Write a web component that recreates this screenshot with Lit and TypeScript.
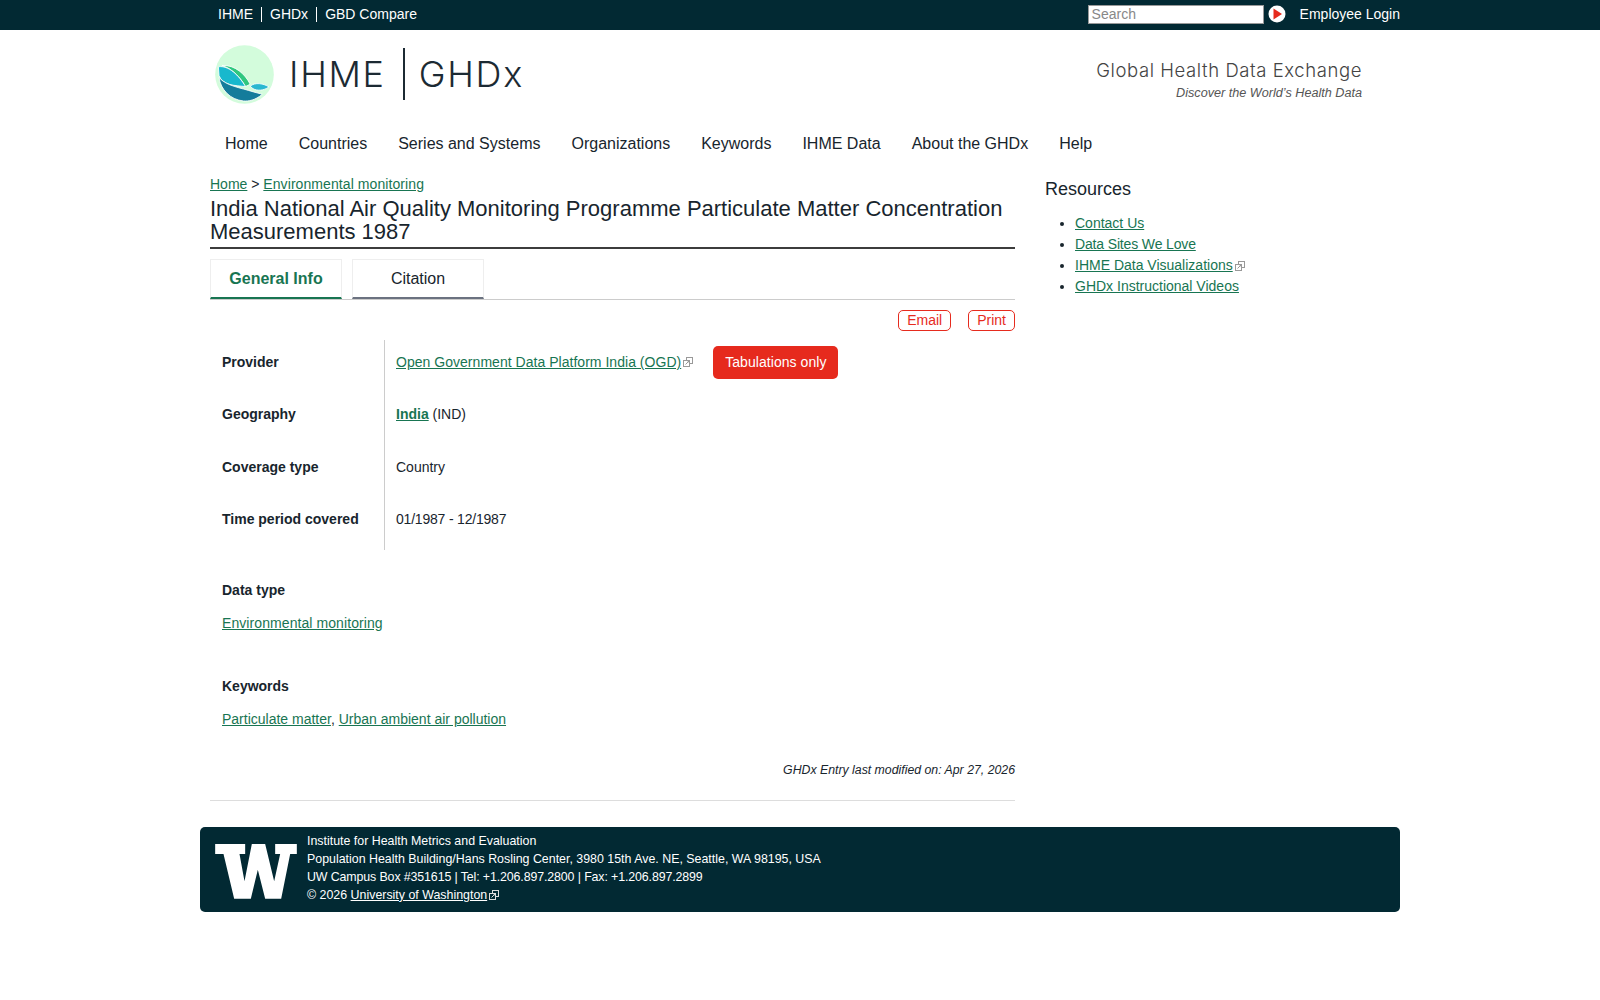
import { LitElement, html, css } from "lit";
import { customElement } from "lit/decorators.js";

const ext = () => html`<svg class="ext" viewBox="0 0 10 10" width="10" height="10" fill="none" stroke="currentColor" stroke-width="1"><rect x="3.5" y="0.5" width="6" height="6"/><rect x="0.5" y="3.5" width="6" height="6" fill="#fff"/><path d="M2.5 7.5 L6 4 M4 3.8 H6.2 V6"/></svg>`;

@customElement("app-root")
export class AppRoot extends LitElement {
  static styles = css`
    :host { display: block; font-family: "Liberation Sans", Arial, sans-serif; color: #18252d; font-size: 14px; background: #fff; min-height: 1000px; }
    a { color: #187552; text-decoration: underline; }
    .top { background: #022933; height: 30px; color: #fff; }
    .wrap { width: 1200px; margin: 0 auto; }
    .top .wrap { display: flex; align-items: center; height: 30px; box-sizing: border-box; padding-bottom: 2px; font-size: 14px; }
    .top-links { display: flex; padding-left: 18px; }
    .top-links span { padding: 0 8px; border-left: 1px solid #fff; line-height: 15px; }
    .top-links span:first-child { padding-left: 0; border: 0; }
    .search { margin-left: auto; display: flex; align-items: center; }
    .search-box { width: 176px; height: 19px; box-sizing: border-box; background: #fff; border: 1px solid #999; color: #888; font-size: 14px; line-height: 17px; padding-left: 3px; }
    .go { margin-left: 4px; display: block; }
    .login { margin-left: 14px; }
    .head { display: flex; align-items: center; height: 88px; padding: 0 38px 0 15px; }
    .logo { display: block; }
    .brand { display: flex; align-items: center; margin: 0 0 0 15px; font-family: "Inter", sans-serif; font-weight: 300; font-size: 36px; letter-spacing: 1.7px; color: #1c2a33; height: 52px; }
    .brand .sep { width: 2px; height: 52px; background: #1c2a33; margin: 0 14px 0 17px; }
    .tag { margin: 11px 0 0 auto; text-align: right; }
    .tag-1 { font-family: "Inter", sans-serif; font-weight: 300; font-size: 18.5px; letter-spacing: 0.58px; color: #444; }
    .tag-2 { font-style: italic; font-size: 12.65px; color: #555; margin-top: 5px; }
    .nav { display: flex; padding-left: 25px; gap: 31px; font-size: 16px; height: 52px; align-items: center; }
    .cols { display: flex; padding-left: 10px; }
    .main { width: 805px; padding-top: 5px; }
    .side { margin-left: 30px; padding-top: 7px; }
    .crumb { line-height: 18px; height: 18px; }
    .wider { letter-spacing: 0.08px; }
    .narrow { letter-spacing: -0.15px; }
    h1 { margin: 4px 0 0; font-size: 22px; font-weight: 400; line-height: 23px; padding-bottom: 4px; border-bottom: 2px solid #3c3c3c; }
    .tabs { display: flex; gap: 10px; margin-top: 10px; border-bottom: 1px solid #ccc; font-size: 16px; height: 40px; }
    .tab { width: 132px; box-sizing: border-box; height: 40px; border: 1px solid #eee; border-bottom: 2px solid #6b7280; display: flex; align-items: center; justify-content: center; }
    .tab.on { font-weight: 700; color: #187552; border-bottom-color: #187552; }
    .acts { display: flex; justify-content: flex-end; gap: 17px; margin-top: 10px; }
    .act { color: #e62b1e; border: 1px solid #e62b1e; border-radius: 5px; height: 21px; box-sizing: border-box; line-height: 19px; padding: 0 8px; background: #fff; }
    .facts { margin-top: 9px; display: grid; grid-template-columns: 175px auto; grid-template-rows: 52px 53px 52px 53px; }
    .facts > div { box-sizing: border-box; padding-bottom: 8px; display: flex; align-items: center; }
    .facts > div.even { padding-bottom: 9px; }
    .k { font-weight: 700; padding-left: 12px; border-right: 1px solid #ccc; }
    .v { padding-left: 11px; }
    .prov { letter-spacing: 0.03px; }
    .ext { color: #999; margin-left: 2px; vertical-align: -1px; flex: none; }
    .badge { background: #e62a1d; color: #fff; border-radius: 5px; height: 33px; line-height: 33px; padding: 0 12px; margin-left: 20px; letter-spacing: 0.05px; }
    .tight { letter-spacing: -0.2px; }
    .sec { padding-left: 12px; }
    .sec b { display: block; line-height: 18px; }
    .sec p { margin: 15px 0 0; line-height: 18px; }
    .s1 { margin-top: 31px; }
    .s2 { margin-top: 45px; }
    .mod { text-align: right; font-style: italic; font-size: 12.3px; margin-top: 34px; line-height: 16px; }
    hr { border: 0; border-top: 1px solid #ddd; margin: 22px 0 0; }
    .side h2 { margin: 0; font-size: 18px; font-weight: 400; line-height: 24px; }
    .side ul { margin: 12px 0 0; padding-left: 30px; }
    .side li { line-height: 21px; }
    .foot { margin: 26px auto 0; width: 1200px; height: 85px; box-sizing: border-box; background: #022933; border-radius: 5px; color: #fff; display: flex; align-items: center; padding-left: 15px; font-size: 12.4px; line-height: 18px; }
    .foot svg.w { display: block; margin: 4px 10px 0 0; }
    .foot .txt { padding-bottom: 4px; }
    .foot .fax { letter-spacing: -0.12px; }
    .foot a { color: #fff; }
    .foot .ext { color: #ddd; }
    .foot .ext rect { fill: #022933; }
  `;

  render() {
    return html`
      <div class="top"><div class="wrap">
        <div class="top-links"><span>IHME</span><span>GHDx</span><span>GBD Compare</span></div>
        <div class="search">
          <div class="search-box">Search</div>
          <svg class="go" width="18" height="18" viewBox="0 0 18 18"><circle cx="9" cy="9" r="8.5" fill="#fff"/><path d="M5.5 3.5 L14 9 L5.5 14.5Z" fill="#e62a1d"/></svg>
          <span class="login">Employee Login</span>
        </div>
      </div></div>
      <div class="wrap">
        <div class="head">
          <svg class="logo" width="59" height="59" viewBox="75 135 176 176">
            <circle cx="163" cy="223" r="87.5" fill="#d3fcdc"/>
            <g stroke="#fff" stroke-width="2.5" stroke-linejoin="round">
              <path d="M96 196C135 194 165 222 180 252L166 259C150 230 125 205 96 196Z" fill="#2fc77f"/>
              <path d="M85 200C115 195 146 225 166 259C135 256 98 256 87 226Z" fill="#18b8cd"/>
              <path d="M87 232C110 258 150 262 190 275L216 282C195 300 175 303 160 302C120 298 92 268 87 232Z" fill="#147c9b"/>
              <path d="M180 258C195 245 220 250 236 260C220 272 200 272 188 265Z" fill="#2ab8d0"/>
            </g>
          </svg>
          <div class="brand"><span>IHME</span><span class="sep"></span><span>GHDx</span></div>
          <div class="tag"><div class="tag-1">Global Health Data Exchange</div><div class="tag-2">Discover the World’s Health Data</div></div>
        </div>
        <div class="nav"><span>Home</span><span>Countries</span><span>Series and Systems</span><span>Organizations</span><span>Keywords</span><span>IHME Data</span><span>About the GHDx</span><span>Help</span></div>
        <div class="cols">
          <div class="main">
            <div class="crumb"><a href="#">Home</a> &gt; <a class="wider" href="#">Environmental monitoring</a></div>
            <h1>India National Air Quality Monitoring Programme Particulate Matter Concentration Measurements 1987</h1>
            <div class="tabs"><div class="tab on">General Info</div><div class="tab">Citation</div></div>
            <div class="acts"><span class="act">Email</span><span class="act">Print</span></div>
            <div class="facts">
              <div class="k">Provider</div><div class="v"><a class="prov" href="#">Open Government Data Platform India (OGD)</a>${ext()}<span class="badge">Tabulations only</span></div>
              <div class="k even">Geography</div><div class="v even"><a href="#"><b>India</b></a>&nbsp;(IND)</div>
              <div class="k">Coverage type</div><div class="v">Country</div>
              <div class="k even">Time period covered</div><div class="v even tight">01/1987 - 12/1987</div>
            </div>
            <div class="sec s1"><b>Data type</b><p><a class="wider" href="#">Environmental monitoring</a></p></div>
            <div class="sec s2"><b>Keywords</b><p><a href="#">Particulate matter</a>, <a href="#">Urban ambient air pollution</a></p></div>
            <div class="mod">GHDx Entry last modified on: Apr 27, 2026</div>
            <hr />
          </div>
          <div class="side">
            <h2>Resources</h2>
            <ul>
              <li><a href="#">Contact Us</a></li>
              <li><a class="narrow" href="#">Data Sites We Love</a></li>
              <li><a href="#">IHME Data Visualizations</a>${ext()}</li>
              <li><a href="#">GHDx Instructional Videos</a></li>
            </ul>
          </div>
        </div>
      </div>
      <div class="foot">
        <svg class="w" width="82" height="55" viewBox="15 18 245 165"><path d="M15 18H105V48H88L103 130L125 18H165L192 130L210 48H195V18H260V48H240L213 182H165L143 95L122 182H72L40 48H15Z" fill="#fff"/></svg>
        <div class="txt">
          <div>Institute for Health Metrics and Evaluation</div>
          <div>Population Health Building/Hans Rosling Center, 3980 15th Ave. NE, Seattle, WA 98195, USA</div>
          <div class="fax">UW Campus Box #351615 | Tel: +1.206.897.2800 | Fax: +1.206.897.2899</div>
          <div>© 2026 <a href="#">University of Washington</a>${ext()}</div>
        </div>
      </div>
    `;
  }
}
